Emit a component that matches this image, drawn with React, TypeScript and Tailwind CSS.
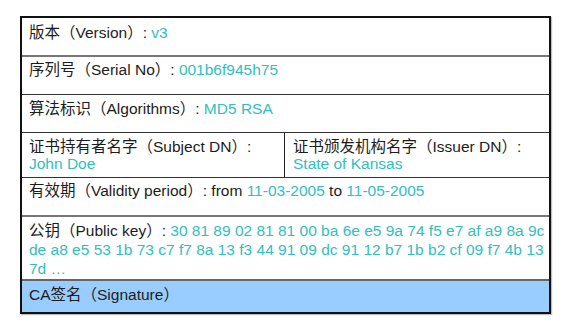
const teal = 'text-[#2fc0c0]';

function Label({ children }: { children: React.ReactNode }) {
  return <span className="text-[#1c1c1c]">{children}</span>;
}

function Value({ children }: { children: React.ReactNode }) {
  return <span className={teal}>{children}</span>;
}

export default function App() {
  return (
    <div className="w-[568px] h-[324px] bg-white pt-[16px] pl-[20px] font-['Liberation_Sans','Noto_Sans_CJK_SC',sans-serif] text-[15.5px] leading-[19px]">
      <div className="w-[531px] border-2 border-[#111] shadow-[1px_1px_1px_rgba(0,0,0,0.25)]">
        <div className="h-[39px] border-b-2 border-[#777] pl-[7px] pt-[5px]">
          <Label>版本（Version）: </Label>
          <Value>v3</Value>
        </div>
        <div className="h-[38px] border-b border-[#333] pl-[7px] pt-[3px]">
          <Label>序列号（Serial No）: </Label>
          <Value>001b6f945h75</Value>
        </div>
        <div className="h-[38px] border-b border-[#333] pl-[7px] pt-[4px]">
          <Label>算法标识（Algorithms）: </Label>
          <Value>MD5 RSA</Value>
        </div>
        <div className="h-[45px] border-b border-[#333] flex leading-[17px]">
          <div className="w-[263px] border-r border-[#222] pl-[7px] pt-[5px]">
            <div><Label>证书持有者名字（Subject DN）:</Label></div>
            <div><Value>John Doe</Value></div>
          </div>
          <div className="flex-1 pl-[8px] pt-[5px]">
            <div><Label>证书颁发机构名字（Issuer DN）:</Label></div>
            <div><Value>State of Kansas</Value></div>
          </div>
        </div>
        <div className="h-[39px] border-b-2 border-[#777] pl-[7px] pt-[3px]">
          <Label>有效期（Validity period）: from </Label>
          <Value>11-03-2005</Value>
          <Label> to </Label>
          <Value>11-05-2005</Value>
        </div>
        <div className="h-[64px] border-b-2 border-[#666] pl-[7px] pt-[4px] whitespace-nowrap">
          <div>
            <Label>公钥（Public key）: </Label>
            <Value>30 81 89 02 81 81 00 ba 6e e5 9a 74 f5 e7 af a9 8a 9c</Value>
          </div>
          <div><Value>de a8 e5 53 1b 73 c7 f7 8a 13 f3 44 91 09 dc 91 12 b7 1b b2 cf 09 f7 4b 13</Value></div>
          <div><Value>7d …</Value></div>
        </div>
        <div className="h-[31px] bg-[#99ccff] pl-[7px] pt-[4px]">
          <Label>CA签名（Signature）</Label>
        </div>
      </div>
    </div>
  );
}
